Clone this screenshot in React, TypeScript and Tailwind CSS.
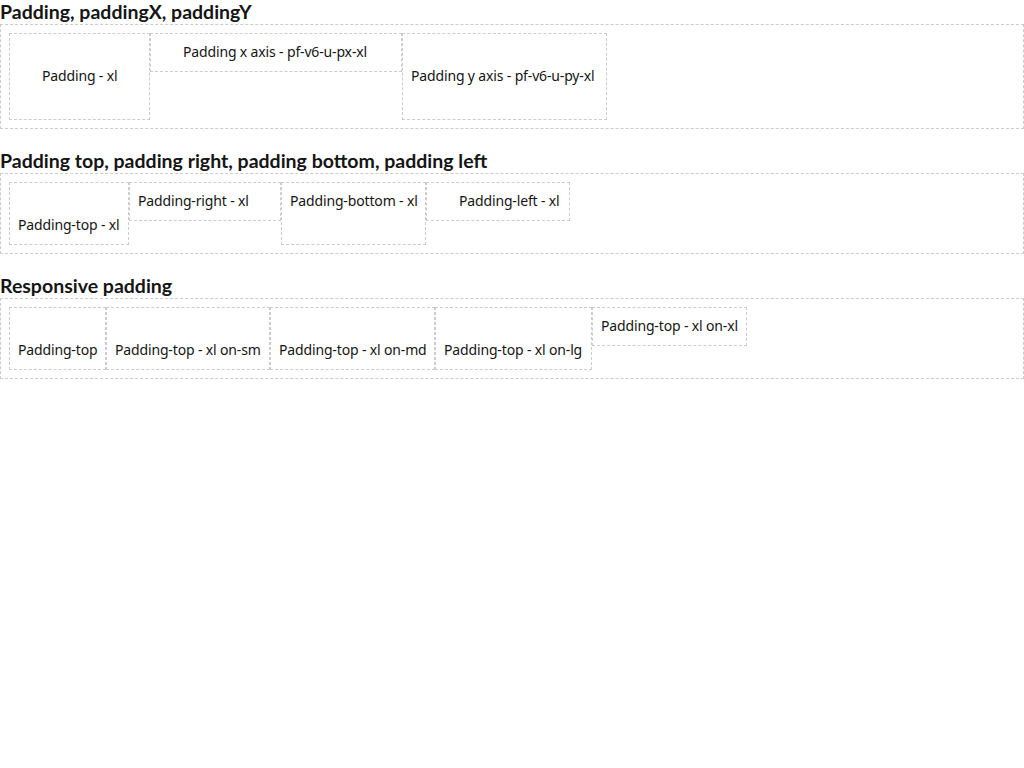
const body = "font-['Noto_Sans',sans-serif] text-[14px] leading-[20.5px] tracking-[-0.15px] text-[#151515]";

type Box = { label: string; w: string; pad: string };

const sections: { title: string; boxes: Box[] }[] = [
    {
        title: 'Padding, paddingX, paddingY',
        boxes: [
            { label: 'Padding - xl', w: 'w-[141px]', pad: 'p-8' },
            { label: 'Padding x axis - pf-v6-u-px-xl', w: 'w-[252px]', pad: 'px-8 py-2' },
            { label: 'Padding y axis - pf-v6-u-py-xl', w: 'w-[205px]', pad: 'px-2 py-8' },
        ],
    },
    {
        title: 'Padding top, padding right, padding bottom, padding left',
        boxes: [
            { label: 'Padding-top - xl', w: 'w-[120px]', pad: 'pt-8 pr-2 pb-2 pl-2' },
            { label: 'Padding-right - xl', w: 'w-[152px]', pad: 'pt-2 pr-8 pb-2 pl-2' },
            { label: 'Padding-bottom - xl', w: 'w-[145px]', pad: 'pt-2 pr-2 pb-8 pl-2' },
            { label: 'Padding-left - xl', w: 'w-[144px]', pad: 'pt-2 pr-2 pb-2 pl-8' },
        ],
    },
    {
        title: 'Responsive padding',
        boxes: [
            { label: 'Padding-top', w: 'w-[97px]', pad: 'pt-8 px-2 pb-2' },
            { label: 'Padding-top - xl on-sm', w: 'w-[164px]', pad: 'p-2 sm:pt-8' },
            { label: 'Padding-top - xl on-md', w: 'w-[165px]', pad: 'p-2 md:pt-8' },
            { label: 'Padding-top - xl on-lg', w: 'w-[157px]', pad: 'p-2 lg:pt-8' },
            { label: 'Padding-top - xl on-xl', w: 'w-[155px]', pad: 'p-2 min-[1200px]:pt-8' },
        ],
    },
];

export default function App() {
    return (
        <div className={`${body} bg-white min-h-[768px] w-[1024px]`}>
            {sections.map((s, i) => (
                <section key={i} className="mb-[20.5px]">
                    {/* section title */}
                    <h2 className="h-6 font-['Lato',sans-serif] text-[19.5px] leading-[23px] font-bold tracking-normal text-[#151515]">
                        {s.title}
                    </h2>
                    <div className="flex items-start border border-dashed border-[#cccccc] p-2">
                        {s.boxes.map((b, j) => (
                            <div
                                key={j}
                                className={`${b.w} ${b.pad} shrink-0 whitespace-nowrap border border-dashed border-[#cccccc]`}
                            >
                                {b.label}
                            </div>
                        ))}
                    </div>
                </section>
            ))}
        </div>
    );
}
